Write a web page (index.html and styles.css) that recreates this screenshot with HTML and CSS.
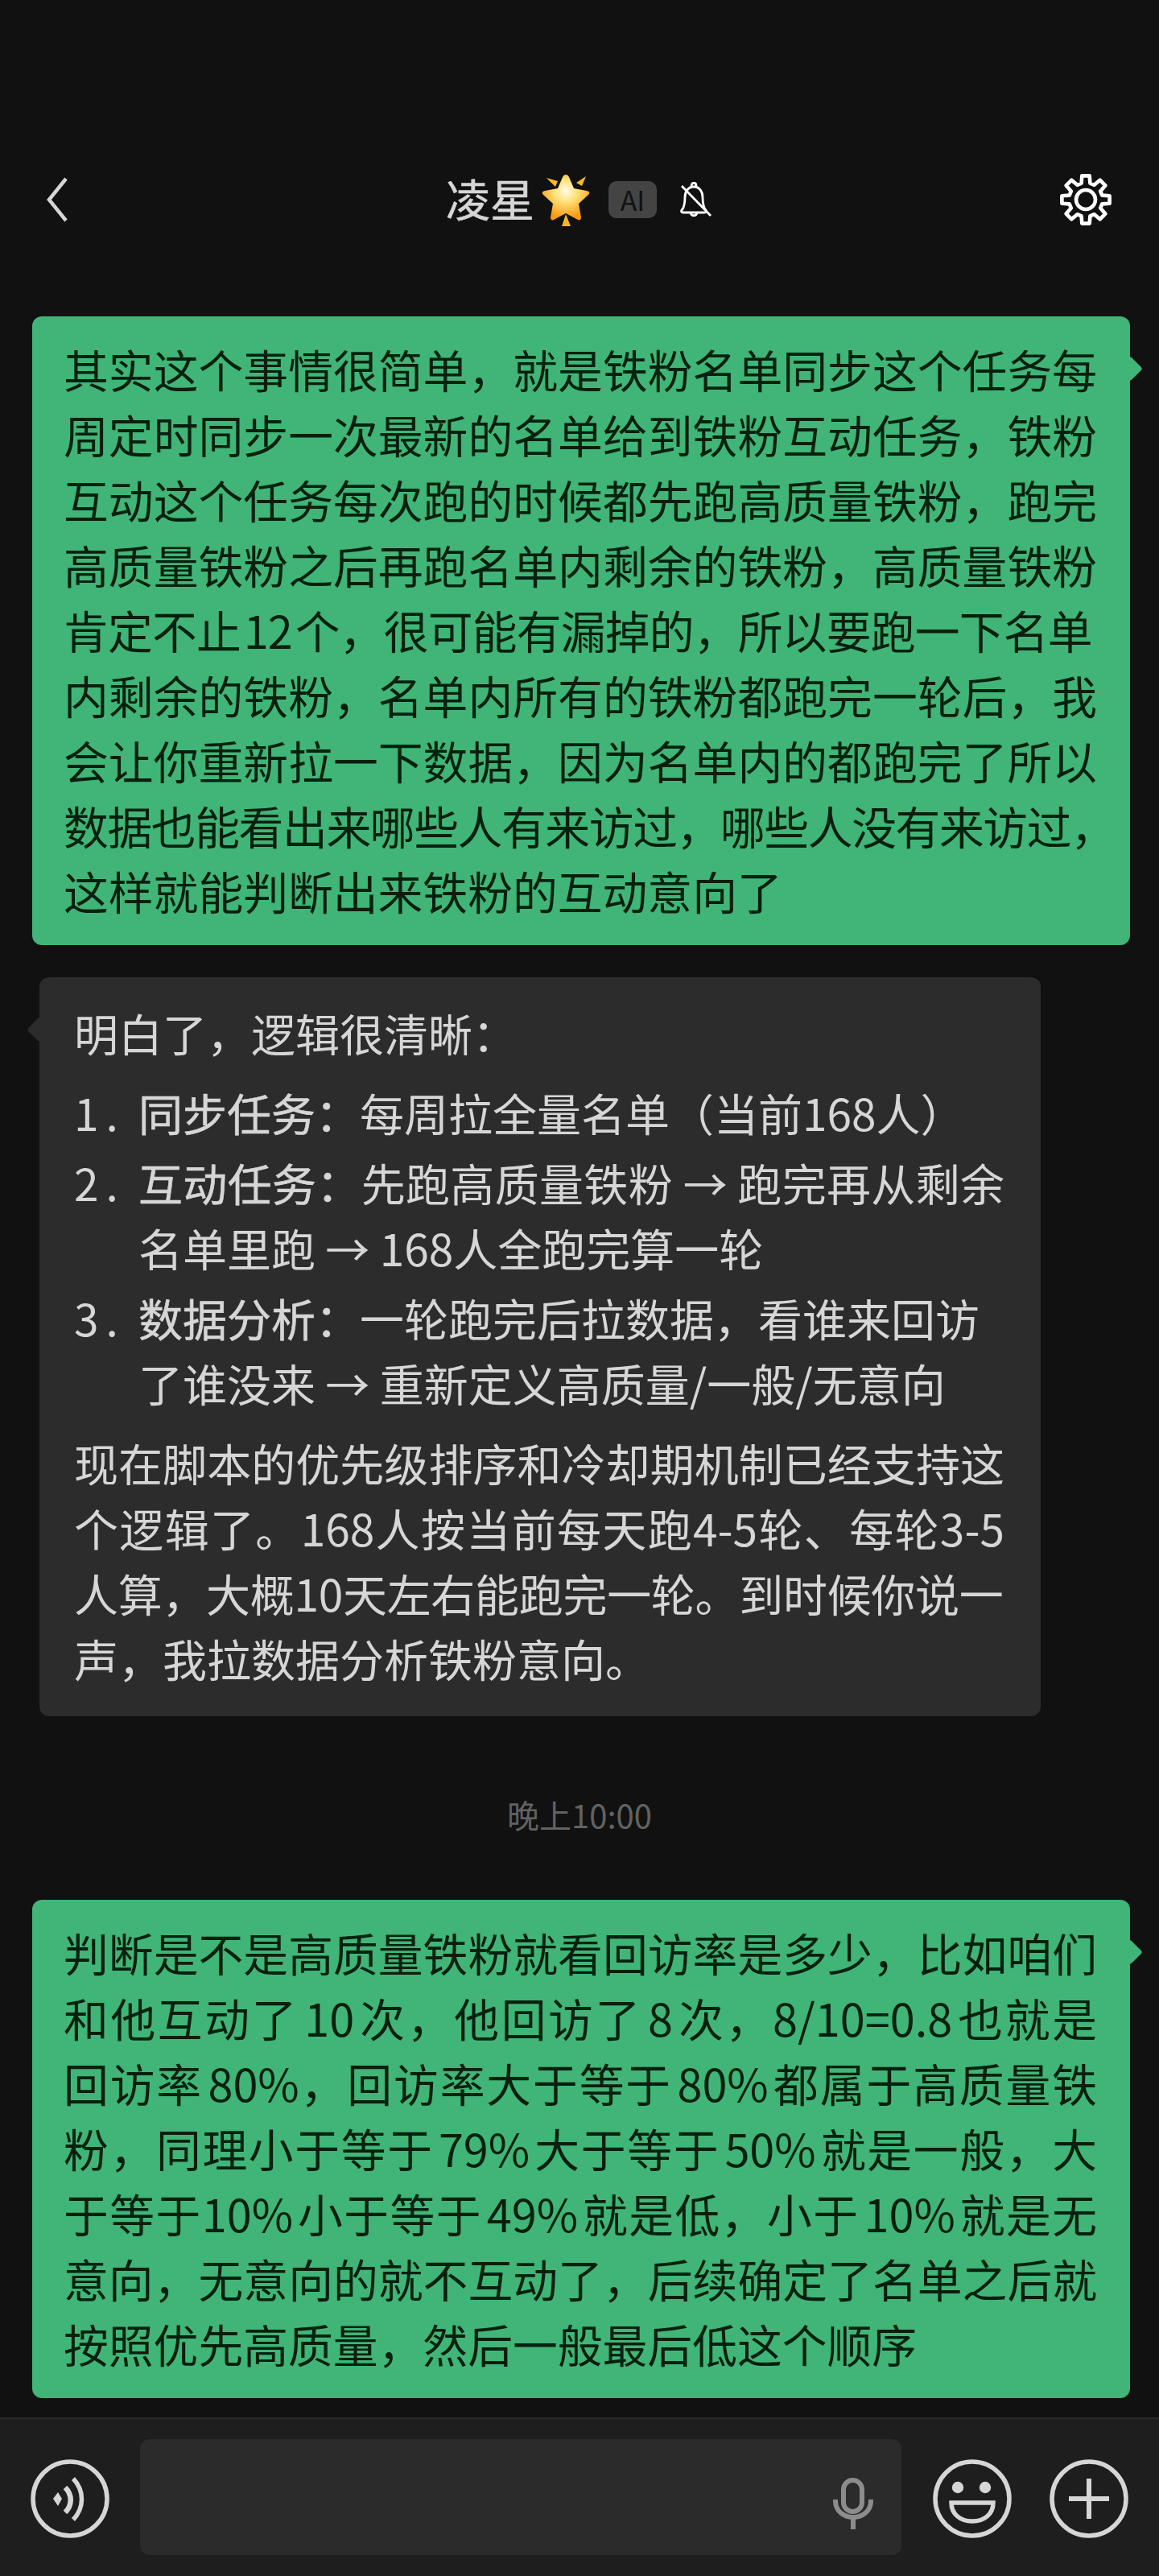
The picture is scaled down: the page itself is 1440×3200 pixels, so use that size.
FILE: index.html
```html
<!DOCTYPE html>
<html lang="zh-CN">
<head>
    <meta charset="UTF-8">
    <title>凌星</title>
    <link rel="stylesheet" href="styles.css">
</head>
<body>

<div class="screen">
    <header class="topbar">
        <svg class="back-icon" viewBox="0 0 28 56"><path d="M25 2 4 28l21 26" fill="none" stroke="#d6d6d6" stroke-width="4.5"/></svg>
        <div class="title">
            <span class="title-name">凌星</span>
            <svg class="star-icon" viewBox="0 0 61 65">
                <defs>
                    <radialGradient id="starFill" cx="50%" cy="36%" r="60%">
                        <stop offset="0" stop-color="#fffce8"/>
                        <stop offset="0.4" stop-color="#ffe27a"/>
                        <stop offset="1" stop-color="#f59a0e"/>
                    </radialGradient>
                </defs>
                <path d="M30 1c2 0 3 1 4 3l6 14 16 3c4 1 4 3 2 5L46 37l3 17c0 3-2 4-4 3L30 49l-15 8c-2 1-4 0-4-3l3-17L2 26c-2-2-2-4 2-5l16-3 6-14c1-2 2-3 4-3z" fill="url(#starFill)"/>
                <path d="M6 5l14 4-3 7zM55 3l-5 12-7-4zM30 50l6 15H25z" fill="#f8b921"/>
            </svg>
            <span class="ai-tag">AI</span>
            <svg class="mute-icon" viewBox="0 0 40 44">
                <path d="M17 6C10 6 6 12 6 19c0 8-1 13-4 16-1 2 0 3 2 3h26c2 0 3-1 2-3-3-3-4-8-4-16 0-7-4-13-11-13zM14 5c0-5 6-5 6 0M13 38c0 5 8 5 8 0" fill="none" stroke="#fff" stroke-width="2.8"/>
                <path d="M2 5l36 37" stroke="#fff" stroke-width="2.8"/>
            </svg>
        </div>
        <svg class="gear-icon" viewBox="0 0 66 66">
            <path d="M27.6 12.7 28.3 3.4H37.7L38.4 12.7 43.5 14.8 50.6 8.7 57.3 15.4 51.2 22.5 53.3 27.6 62.6 28.3V37.7L53.3 38.4 51.2 43.5 57.3 50.6 50.6 57.3 43.5 51.2 38.4 53.3 37.7 62.6H28.3L27.6 53.3 22.5 51.2 15.4 57.3 8.7 50.6 14.8 43.5 12.7 38.4 3.4 37.7V28.3L12.7 27.6 14.8 22.5 8.7 15.4 15.4 8.7 22.5 14.8z" fill="none" stroke="#fff" stroke-width="4.6" stroke-linejoin="round"/>
            <circle cx="33" cy="33" r="12" fill="none" stroke="#fff" stroke-width="4.6"/>
        </svg>
    </header>

    <main class="messages">
        <div class="bubble bubble-me">
            <span class="line">其实这个事情很简单&#xFF0C;就是铁粉名单同步这个任务每</span>
            <span class="line">周定时同步一次最新的名单给到铁粉互动任务&#xFF0C;铁粉</span>
            <span class="line">互动这个任务每次跑的时候都先跑高质量铁粉&#xFF0C;跑完</span>
            <span class="line">高质量铁粉之后再跑名单内剩余的铁粉&#xFF0C;高质量铁粉</span>
            <span class="line line-squeeze">肯定不止 12 个&#xFF0C;很可能有漏掉的&#xFF0C;所以要跑一下名单</span>
            <span class="line">内剩余的铁粉&#xFF0C;名单内所有的铁粉都跑完一轮后&#xFF0C;我</span>
            <span class="line">会让你重新拉一下数据&#xFF0C;因为名单内的都跑完了所以</span>
            <span class="line line-over">数据也能看出来哪些人有来访过&#xFF0C;哪些人没有来访过&#xFF0C;</span>
            <span class="line line-end">这样就能判断出来铁粉的互动意向了</span>
        </div>

        <div class="bubble bubble-ai">
            <p class="ai-para">明白了&#xFF0C;逻辑很清晰&#xFF1A;</p>
            <ol class="ai-list">
                <li><span class="num">1.</span><span class="item-text"><b class="item-head">同步任务&#xFF1A;</b>每周拉全量名单&#xFF08;当前168人&#xFF09;</span></li>
                <li><span class="num">2.</span><span class="item-text"><span class="line"><b class="item-head">互动任务&#xFF1A;</b>先跑高质量铁粉 → 跑完再从剩余</span>名单里跑 → 168人全跑完算一轮</span></li>
                <li><span class="num">3.</span><span class="item-text"><b class="item-head">数据分析&#xFF1A;</b>一轮跑完后拉数据&#xFF0C;看谁来回访<br>了谁没来 → 重新定义高质量/一般/无意向</span></li>
            </ol>
            <p class="ai-para">
                <span class="line">现在脚本的优先级排序和冷却期机制已经支持这</span>
                <span class="line">个逻辑了。168人按当前每天跑4-5轮、每轮3-5</span>
                <span class="line line-squeeze">人算&#xFF0C;大概10天左右能跑完一轮。到时候你说一</span>
                <span class="line line-end">声&#xFF0C;我拉数据分析铁粉意向。</span>
            </p>
        </div>

        <div class="time-label">晚上10:00</div>

        <div class="bubble bubble-me">
            <span class="line">判断是不是高质量铁粉就看回访率是多少&#xFF0C;比如咱们</span>
            <span class="line">和他互动了 10 次&#xFF0C;他回访了 8 次&#xFF0C;8/10=0.8 也就是</span>
            <span class="line">回访率 80%&#xFF0C;回访率大于等于 80% 都属于高质量铁</span>
            <span class="line">粉&#xFF0C;同理小于等于 79% 大于等于 50% 就是一般&#xFF0C;大</span>
            <span class="line">于等于10% 小于等于 49% 就是低&#xFF0C;小于 10% 就是无</span>
            <span class="line">意向&#xFF0C;无意向的就不互动了&#xFF0C;后续确定了名单之后就</span>
            <span class="line line-end">按照优先高质量&#xFF0C;然后一般最后低这个顺序</span>
        </div>
    </main>

    <footer class="inputbar">
        <svg class="round-icon" viewBox="0 0 98 98">
            <circle cx="49" cy="49" r="46" fill="none" stroke="#d6d6d6" stroke-width="5.5"/>
            <path d="M28 49l6-8 5 8-5 9z" fill="#d6d6d6"/>
            <path d="M43 35c9 9 9 22 0 31" fill="none" stroke="#d6d6d6" stroke-width="6.5"/>
            <path d="M53 24c14 15 14 36 0 51" fill="none" stroke="#d6d6d6" stroke-width="5.5"/>
        </svg>
        <div class="input-box">
            <svg class="mic-icon" viewBox="0 0 50 64">
                <rect x="13" y="3" width="23" height="39" rx="11.5" fill="none" stroke="#8c8c8c" stroke-width="6"/>
                <path d="M3 27v2c0 12 10 20 22 20s22-8 22-20v-2M25 49v15" fill="none" stroke="#8c8c8c" stroke-width="6"/>
            </svg>
        </div>
        <svg class="round-icon" viewBox="0 0 98 98">
            <circle cx="49" cy="49" r="46" fill="none" stroke="#d6d6d6" stroke-width="5.5"/>
            <circle cx="31" cy="35" r="7.2" fill="#d6d6d6"/>
            <circle cx="65" cy="35" r="7.2" fill="#d6d6d6"/>
            <path d="M23 54h52c0 14-11 23-26 23s-26-9-26-23z" fill="none" stroke="#d6d6d6" stroke-width="5.5"/>
        </svg>
        <svg class="round-icon plus-icon" viewBox="0 0 98 98">
            <circle cx="49" cy="49" r="46" fill="none" stroke="#d6d6d6" stroke-width="5.5"/>
            <path d="M49 24v50M24 49h50" stroke="#d6d6d6" stroke-width="6"/>
        </svg>
    </footer>
</div>

</body>
</html>
```
FILE: styles.css
```css
html, body {
    margin: 0;
    background-color: #111111;
}
.screen {
    width: 1440px;
    height: 3200px;
    display: flex;
    flex-direction: column;
    font-family: "Noto Sans CJK SC", "Noto Sans", sans-serif;
    color: #d6d6d6;
}
.topbar {
    height: 393px;
    box-sizing: border-box;
    padding: 215px 58px 0 57px;
    display: grid;
    grid-template-columns: 1fr auto 1fr;
    align-items: start;
    flex-shrink: 0;
}
.back-icon {
    width: 28px;
    height: 56px;
    margin-top: 5px;
}
.gear-icon {
    width: 66px;
    height: 66px;
    justify-self: end;
}
.title {
    display: flex;
    align-items: center;
    height: 66px;
}
.title-name {
    font-size: 55px;
    line-height: 56px;
    -webkit-text-stroke: 0.6px #d6d6d6;
    margin-top: -6px;
}
.star-icon {
    width: 61px;
    height: 65px;
    margin-left: 9px;
}
.ai-tag {
    width: 60px;
    height: 46px;
    margin-left: 22px;
    border-radius: 10px;
    background-color: #444444;
    color: #111111;
    font-size: 34px;
    line-height: 46px;
    text-align: center;
}
.mute-icon {
    width: 40px;
    height: 44px;
    margin-left: 29px;
}
.messages {
    flex: 1;
    display: flex;
    flex-direction: column;
    align-items: flex-start;
}
.bubble {
    position: relative;
    box-sizing: border-box;
    border-radius: 12px;
}
.line {
    display: block;
    text-align-last: justify;
}
.line-end {
    text-align-last: left;
}
.line-over {
    white-space: nowrap;
    text-align-last: left;
    letter-spacing: -1.4px;
}
.line-squeeze {
    white-space: nowrap;
    text-align-last: left;
    letter-spacing: -0.8px;
}
.bubble-me {
    margin-left: 40px;
    width: 1364px;
    padding: 24px 41px 28px 39px;
    background-color: #40b577;
    color: #06200f;
    font-size: 55.8px;
    line-height: 81px;
    word-spacing: -8px;
}
.bubble-me::after {
    content: "";
    position: absolute;
    right: -14px;
    top: 51px;
    width: 28px;
    height: 28px;
    border-radius: 4px;
    background-color: #40b577;
    transform: rotate(45deg) scale(.8);
}
.bubble-ai {
    margin: 40px 0 0 49px;
    width: 1244px;
    height: 918px;
    padding: 28px 45px 0 43px;
    background-color: #2c2c2c;
    font-size: 55px;
    line-height: 81px;
}
.bubble-ai .line-squeeze {
    letter-spacing: -0.3px;
}
.bubble-ai::before {
    content: "";
    position: absolute;
    left: -14px;
    top: 51px;
    width: 28px;
    height: 28px;
    border-radius: 4px;
    background-color: #2c2c2c;
    transform: rotate(45deg) scale(.8);
}
.ai-para {
    margin: 0;
}
.ai-list {
    margin: 18px 0 18px;
    padding: 0;
    list-style: none;
}
.ai-list li {
    display: flex;
    margin-bottom: 6px;
}
.num {
    width: 80px;
    flex-shrink: 0;
    letter-spacing: 9px;
}
.item-text {
    flex: 1;
    white-space: nowrap;
}
.item-head {
    font-weight: 400;
    -webkit-text-stroke: 0.6px #d6d6d6;
}
.time-label {
    align-self: center;
    margin: 94px 0 78px;
    font-size: 40px;
    line-height: 56px;
    color: #626262;
}
.inputbar {
    height: 197px;
    flex-shrink: 0;
    box-sizing: border-box;
    border-top: 2px solid #2a2a2a;
    background-color: #1e1e1e;
    padding: 25px 38px 0 38px;
    display: flex;
    align-items: flex-start;
}
.round-icon {
    width: 98px;
    height: 98px;
    margin-top: 25px;
    flex-shrink: 0;
}
.input-box {
    width: 947px;
    height: 144px;
    margin: 0 39px 0 38px;
    background-color: #2b2b2b;
    border-radius: 12px;
    display: flex;
    justify-content: flex-end;
    align-items: flex-end;
    padding: 0 35px 32px 0;
    box-sizing: border-box;
}
.mic-icon {
    width: 50px;
    height: 64px;
}
.plus-icon {
    margin-left: 47px;
}
```
